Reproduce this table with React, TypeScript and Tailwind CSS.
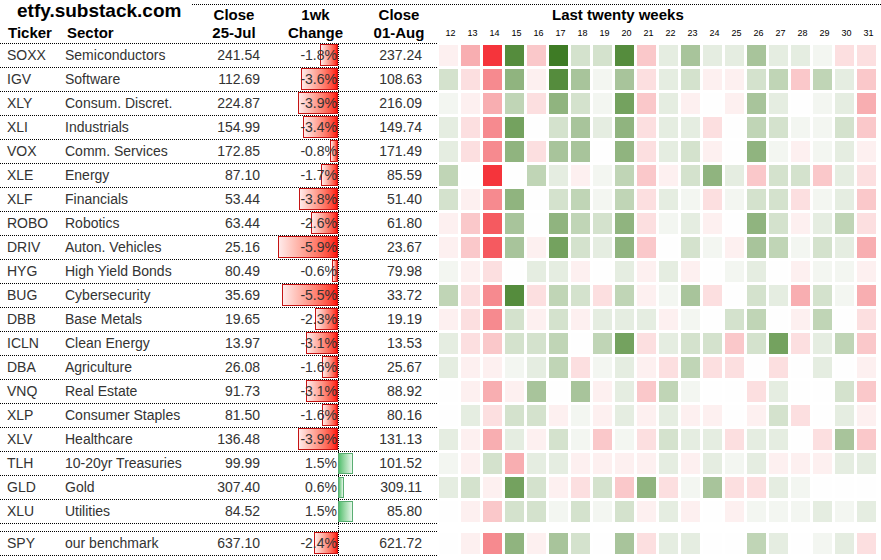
import React from "react";

type Row = {
  t: string;
  s: string;
  c1: string;
  ch: number;
  c2: string;
  w: number[];
};

const RED = ["#fefefe", "#fdf0f0", "#fcdfe0", "#fac8ca", "#f8aeb1", "#f68a8f", "#f55a60", "#f5343b"];
const GREEN = ["#fefefe", "#f3f6f1", "#e5ede1", "#d4e2cd", "#c0d5b6", "#a8c49b", "#90b47f", "#74a25f", "#558c3d", "#3e7b25"];

const weeks = [12, 13, 14, 15, 16, 17, 18, 19, 20, 21, 22, 23, 24, 25, 26, 27, 28, 29, 30, 31];

// heat levels: negative = red shade, positive = green shade
const rows: Row[] = [
  { t: "SOXX", s: "Semiconductors", c1: "241.54", ch: -1.8, c2: "237.24", w: [-1, -4, -7, 8, -3, 9, 3, 3, 8, -3, 2, 5, 2, 2, 5, 2, 2, 1, -2, -2] },
  { t: "IGV", s: "Software", c1: "112.69", ch: -3.6, c2: "108.63", w: [3, -2, -5, 6, -1, 8, 5, 1, 5, -2, 2, 3, -1, -1, 3, 4, -3, 4, 2, -3] },
  { t: "XLY", s: "Consum. Discret.", c1: "224.87", ch: -3.9, c2: "216.09", w: [1, -1, -4, 4, -2, 6, 3, 1, 7, -3, 2, -1, 0, -1, 5, 2, 0, 1, 2, -4] },
  { t: "XLI", s: "Industrials", c1: "154.99", ch: -3.4, c2: "149.74", w: [2, -2, -5, 7, 0, 3, 5, 2, 6, -2, 2, 2, -2, 0, 4, 3, 1, 1, 3, -3] },
  { t: "VOX", s: "Comm. Services", c1: "172.85", ch: -0.8, c2: "171.49", w: [2, -2, -5, 6, -2, 5, 5, 0, 6, -2, 2, 3, -1, 0, 6, 1, -1, 1, 2, -1] },
  { t: "XLE", s: "Energy", c1: "87.10", ch: -1.7, c2: "85.59", w: [4, 0, -7, 0, 4, 2, -1, 1, 4, -3, -1, 3, 6, 2, -3, 3, 3, -3, 2, -2] },
  { t: "XLF", s: "Financials", c1: "53.44", ch: -3.8, c2: "51.40", w: [3, -1, -5, 6, 0, 3, 4, 1, 4, -2, 2, 1, -2, 1, 3, 3, -2, 1, 2, -3] },
  { t: "ROBO", s: "Robotics", c1: "63.44", ch: -2.6, c2: "61.80", w: [-1, -3, -6, 5, 0, 6, 4, 3, 6, -2, 1, 2, -1, 0, 6, 3, -1, 2, 4, -2] },
  { t: "DRIV", s: "Auton. Vehicles", c1: "25.16", ch: -5.9, c2: "23.67", w: [-1, -3, -6, 5, -1, 7, 3, 2, 6, -3, 0, 3, 1, -1, 5, 4, 1, 3, 2, -4] },
  { t: "HYG", s: "High Yield Bonds", c1: "80.49", ch: -0.6, c2: "79.98", w: [1, -1, -2, 0, 2, 2, -1, 0, 2, -1, 2, -1, 0, 1, 2, 0, -1, 1, 1, -1] },
  { t: "BUG", s: "Cybersecurity", c1: "35.69", ch: -5.5, c2: "33.72", w: [4, -2, -5, 8, -2, 4, 3, -2, 4, -1, 1, 5, -2, 0, 3, 2, -4, 3, 1, -4] },
  { t: "DBB", s: "Base Metals", c1: "19.65", ch: -2.3, c2: "19.19", w: [-1, -2, -5, 3, -1, 3, -1, 2, 2, 2, -1, 1, 0, 3, 4, 0, -1, 4, 0, -2] },
  { t: "ICLN", s: "Clean Energy", c1: "13.97", ch: -3.1, c2: "13.53", w: [2, -2, -3, 3, 3, 4, 0, 4, 7, -2, 2, 3, 3, -3, 3, 7, -2, 2, 4, -3] },
  { t: "DBA", s: "Agriculture", c1: "26.08", ch: -1.6, c2: "25.67", w: [2, -1, -1, 1, 2, 4, -2, 1, 2, -1, -2, 4, -2, -2, 0, -2, 0, 2, 0, -1] },
  { t: "VNQ", s: "Real Estate", c1: "91.73", ch: -3.1, c2: "88.92", w: [0, -1, -4, -1, 5, 0, 5, -1, 2, -3, 4, 1, 0, 0, -2, 2, 0, 0, 3, -3] },
  { t: "XLP", s: "Consumer Staples", c1: "81.50", ch: -1.6, c2: "80.16", w: [0, 2, -2, 3, 3, -1, 1, -1, 2, -1, 2, -1, -1, 0, -1, 3, -2, 0, 2, -1] },
  { t: "XLV", s: "Healthcare", c1: "136.48", ch: -3.9, c2: "131.13", w: [2, -1, -4, 2, -1, 3, 1, -3, 1, -2, 3, 2, 2, -2, 2, 2, 0, -2, 5, -3] },
  { t: "TLH", s: "10-20yr Treasuries", c1: "99.99", ch: 1.5, c2: "101.52", w: [1, -1, 3, -4, 2, 2, -1, -1, -1, -1, 2, -1, 2, 1, 2, -1, -1, -1, 2, 2] },
  { t: "GLD", s: "Gold", c1: "307.40", ch: 0.6, c2: "309.11", w: [2, 3, -1, 7, 3, -1, -2, 3, -3, 6, -2, 1, 5, -2, -2, 2, 1, 0, 0, 0] },
  { t: "XLU", s: "Utilities", c1: "84.52", ch: 1.5, c2: "85.80", w: [0, -1, -3, 3, 3, 1, 3, 1, 3, -1, 2, -1, 0, -1, 1, 1, 1, 2, 1, 2] },
];

const spy: Row = { t: "SPY", s: "our benchmark", c1: "637.10", ch: -2.4, c2: "621.72", w: [0, -1, -5, 6, -1, 5, 3, 0, 5, -2, 2, 2, 0, 0, 4, 2, 0, 1, 2, -2] };

const heat = (v: number) => (v < 0 ? RED[-v] : GREEN[v]);

const DataRow = ({ r, spyRow }: { r: Row; spyRow?: boolean }) => {
  const barW = Math.round(Math.abs(r.ch) * 10.2);
  return (
    <div className="flex">
      <div
        className={
          spyRow
            ? "w-[437px] shrink-0 flex h-[25px] border-y border-dotted border-black text-[14px] leading-[23px]"
            : "w-[437px] shrink-0 flex h-[24px] border-b border-dotted border-black text-[14px] leading-[23px]"
        }>
        <div className="w-[65px] pl-[7px]">{r.t}</div>
        <div className="w-[130px] whitespace-nowrap">{r.s}</div>
        <div className="w-[67px] pr-[2px] text-right">{r.c1}</div>
        <div className="w-[77px] relative border-r border-dotted border-black text-right pr-[1px]">
          {r.ch < 0 ? (
            <div
              className="absolute right-0 top-0 h-[22px] border border-[#c41414] bg-linear-to-r from-[#ffeaea] to-[#ff0000]"
              style={{ width: barW }}
            />
          ) : (
            <div
              className="absolute left-full top-[1px] h-[21px] border border-[#5aad72] bg-linear-to-r from-[#52c070] to-[#e6f6ea]"
              style={{ width: barW }}
            />
          )}
          <span className="relative">{r.ch.toFixed(1)}%</span>
        </div>
        <div className="w-[84px] pr-[1px] text-right">{r.c2}</div>
      </div>
      <div className={spyRow ? "flex gap-[3px] pl-[2px] pt-[2px]" : "flex gap-[3px] pl-[2px] pt-[1px]"}>
        {r.w.map((v, i) => (
          <div key={i} className="w-[19px] h-[21px]" style={{ backgroundColor: heat(v) }} />
        ))}
      </div>
    </div>
  );
};

export default function App() {
  return (
    <div className="w-[881px] h-[560px] overflow-hidden bg-white text-[#333] font-['Liberation_Sans',Arial,sans-serif]">
      <div className="flex h-[43px] text-black">
        <div className="w-[192px] shrink-0">
          <div className="h-[24px] leading-[22px] pl-[17px] text-[19px] font-bold whitespace-nowrap">
            etfy.substack.com
          </div>
          <div className="flex leading-[18px] text-[15px] font-bold">
            <div className="w-[65px] pl-[8px]">Ticker</div>
            <div className="pl-[2px]">Sector</div>
          </div>
        </div>
        <div className="flex-1 mt-[4px] pt-[1px] border-t border-dotted border-black flex text-[15px] font-bold leading-[18px]">
          <div className="w-[84px] text-center">
            Close
            <br />
            25-Jul
          </div>
          <div className="w-[79px] text-center">
            1wk
            <br />
            Change
          </div>
          <div className="w-[82px] pl-[6px] text-center">
            Close
            <br />
            01-Aug
          </div>
          <div className="flex-1">
            <div className="pl-[115px] whitespace-nowrap">Last twenty weeks</div>
            <div className="flex gap-[3px] pl-[4px] text-[9px] font-normal">
              {weeks.map((w) => (
                <div key={w} className="w-[19px] text-center">
                  {w}
                </div>
              ))}
            </div>
          </div>
        </div>
      </div>
      <div className="w-[437px] border-t border-dotted border-black" />
      {rows.map((r) => (
        <DataRow key={r.t} r={r} />
      ))}
      <div className="h-[7px] w-[339px] border-r border-dotted border-black" />
      <DataRow r={spy} spyRow />
    </div>
  );
}
